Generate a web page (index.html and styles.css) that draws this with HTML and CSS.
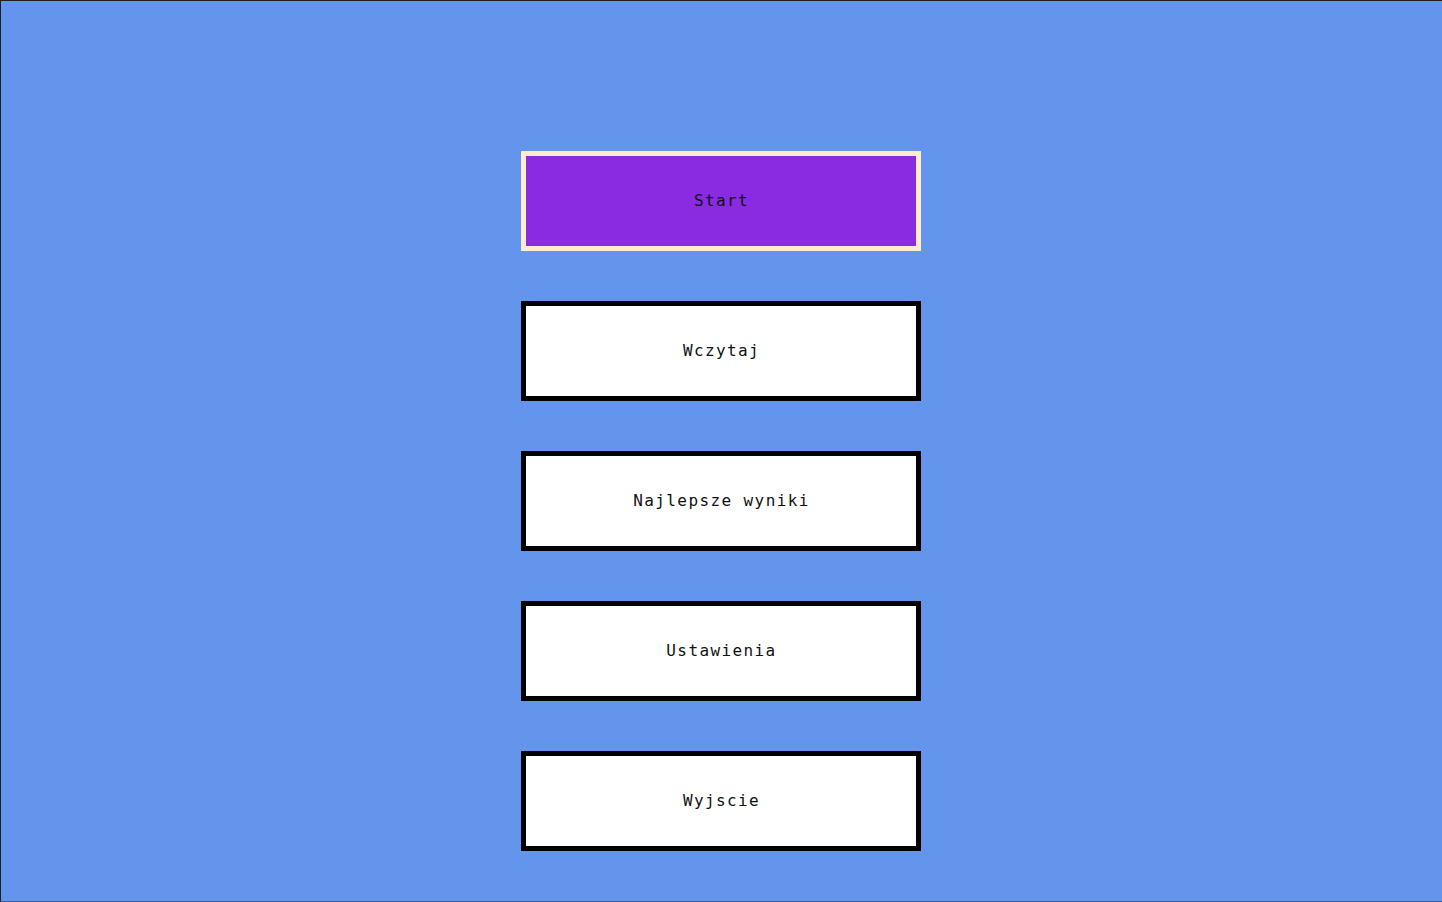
FILE: index.html
```html
<!DOCTYPE html>
<html lang="pl">
<head>
<meta charset="utf-8">
<title>Menu</title>
<link rel="stylesheet" href="styles.css">
</head>
<body>
<div class="screen">
  <nav class="menu">
    <button class="menu-btn menu-btn--active">Start</button>
    <button class="menu-btn">Wczytaj</button>
    <button class="menu-btn">Najlepsze wyniki</button>
    <button class="menu-btn">Ustawienia</button>
    <button class="menu-btn">Wyjscie</button>
  </nav>
</div>
</body>
</html>
```
FILE: styles.css
```css
html, body {
  margin: 0;
  padding: 0;
  background: #6495ed;
}

.screen {
  box-sizing: border-box;
  width: 1442px;
  height: 902px;
  background: #6495ed;
  border-left: 1px solid #1f1f1f;
  border-top: 1px solid #1f1f1f;
  border-bottom: 1px solid #3f5f98;
  display: flex;
  justify-content: center;
  padding-top: 150px;
}

.menu {
  display: flex;
  flex-direction: column;
  gap: 50px;
  margin-left: -1px;
}

.menu-btn {
  box-sizing: border-box;
  width: 400px;
  height: 100px;
  background: #ffffff;
  border: 5px solid #000000;
  margin: 0;
  padding: 0 0 2px 1px;
  font-family: "DejaVu Sans Mono", monospace;
  font-size: 16px;
  letter-spacing: 1.4px;
  color: #111111;
  display: flex;
  align-items: center;
  justify-content: center;
}

.menu-btn--active {
  background: #8a2be2;
  border-color: #ffebcd;
}
```
